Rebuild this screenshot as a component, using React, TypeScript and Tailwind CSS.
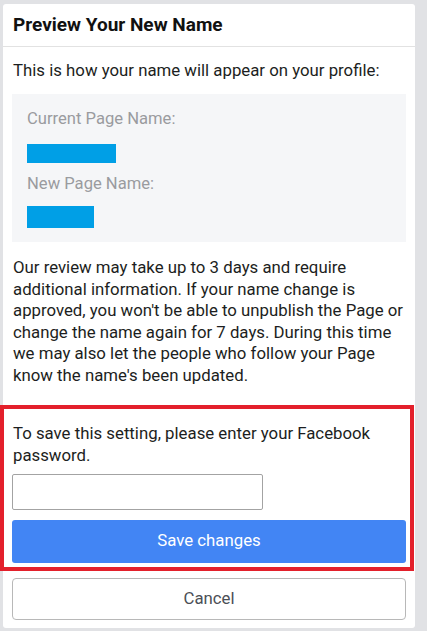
const reviewLines = [
  "Our review may take up to 3 days and require",
  "additional information. If your name change is",
  "approved, you won't be able to unpublish the Page or",
  "change the name again for 7 days. During this time",
  "we may also let the people who follow your Page",
  "know the name's been updated.",
];

export default function App() {
  return (
    <div
      className="h-[631px] w-[427px] overflow-hidden bg-[#e1e2e5] pl-[3px] pt-[4px]"
      style={{ fontFamily: "Roboto, 'Noto Sans', sans-serif" }}
    >
      <div className="w-[412px] rounded-[3px] bg-white pb-[8px]">
        <div className="flex h-[43px] items-center border-b border-[#e2e2e2] px-[10px]">
          <h2 className="text-[19px] font-bold text-[#111]">Preview Your New Name</h2>
        </div>

        <div className="px-[9px] pt-[12px]">
          <p className="pl-[1px] text-[16.8px] leading-[22px] text-[#1c1e21]">
            This is how your name will appear on your profile:
          </p>

          <div className="mt-[13px] h-[148px] w-[394px] bg-[#f5f6f8] pl-[15px] pt-[14px]">
            <p className="text-[16.6px] leading-[22px] text-[#9a9b9f]">Current Page Name:</p>
            <div className="mt-[14px] h-[19px] w-[89px] bg-[#009fe6]" />
            <p className="mt-[10px] text-[16.6px] leading-[22px] text-[#9a9b9f]">New Page Name:</p>
            <div className="mt-[11px] h-[22px] w-[67px] bg-[#009fe6]" />
          </div>

          <p className="mt-[15px] pl-[1px] text-[16.8px] leading-[21.6px] text-[#1c1e21]">
            {reviewLines.map((line) => (
              <span key={line} className="block whitespace-nowrap">
                {line}
              </span>
            ))}
          </p>
        </div>

        <div className="-ml-[3px] mt-[18px] w-[414px] border-[4px] border-[#e3202b] pb-[4px] pl-[8px] pt-[13px]">
          <p className="pl-[1px] text-[16.8px] leading-[22px] text-[#1c1e21]">
            To save this setting, please enter your Facebook password.
          </p>
          <input
            type="password"
            className="mt-[8px] block h-[36px] w-[251px] rounded-[2px] border border-[#a3a3a3] bg-white outline-none"
          />
          <button
            type="button"
            className="mt-[10px] flex h-[43px] w-[394px] items-center justify-center rounded-[3px] bg-[#4285f4] text-[16.8px] text-white"
          >
            Save changes
          </button>
        </div>

        <div className="px-[9px] pt-[7px]">
          <button
            type="button"
            className="flex h-[42px] w-[394px] items-center justify-center rounded-[4px] border border-[#b8b8b8] bg-white text-[16.8px] text-[#4b4f56]"
          >
            Cancel
          </button>
        </div>
      </div>
    </div>
  );
}
